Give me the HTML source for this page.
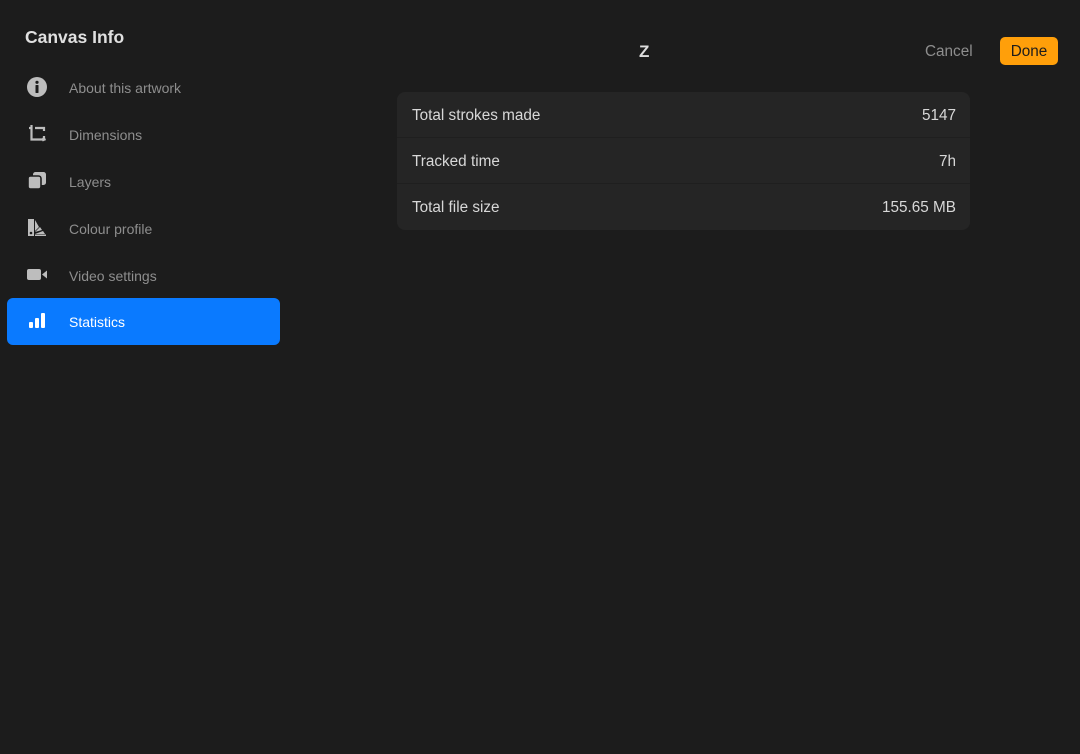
<!DOCTYPE html>
<html><head><meta charset="utf-8"><style>
*{margin:0;padding:0;box-sizing:border-box}
body{width:1080px;height:754px;background:#1c1c1c;font-family:"Liberation Sans",sans-serif;position:relative;overflow:hidden;color:#ddd}
.t{position:absolute;left:25px;top:27px;font-size:17.5px;font-weight:bold;color:#e0e0e0}
.item{position:absolute;left:7px;width:273px;height:47px;border-radius:6px;font-size:14px;color:#8e8e8e}
.item span{position:absolute;left:62px;top:16px}
.item svg{position:absolute;left:20px;top:13px;width:20px;height:20px}
.sel{background:#0a7aff;color:#fff}
.z{position:absolute;left:639px;top:42px;font-size:17px;font-weight:bold;color:#ddd}
.cancel{position:absolute;left:925px;top:43px;font-size:15.3px;color:#8e8e8e}
.done{position:absolute;left:1000px;top:37px;width:58px;height:28px;background:#ff9f0a;border-radius:5px;color:#1c1c1c;font-size:15.3px;text-align:center;line-height:29px}
.card{position:absolute;left:397px;top:92px;width:573px;height:138px;background:#252525;border-radius:8px}
.row{height:46px;border-bottom:1px solid #1f1f1f;position:relative;font-size:15.3px;color:#d8d8d8}
.row:last-child{border-bottom:none}
.row .l{position:absolute;left:15px;top:15px}
.row .r{position:absolute;right:14px;top:15px}
</style></head><body>
<div class="t">Canvas Info</div>
<div class="item" style="top:64px"><svg viewBox="0 0 20 20"><circle cx="10" cy="10" r="10" fill="#bdbdbd"/><circle cx="10" cy="5.3" r="1.6" fill="#1c1c1c"/><rect x="8.5" y="8" width="3" height="8" rx="0.5" fill="#1c1c1c"/></svg><span>About this artwork</span></div>
<div class="item" style="top:111px"><svg viewBox="0 0 20 20" fill="none" stroke="#bdbdbd" stroke-width="2.2"><path d="M4.5 1v14.5h14"/><path d="M2 4h2.5"/><path d="M8 4h9v3"/><path d="M17 12v3.5"/><path d="M15.5 14l2.5 1.5-2.5 1.5" stroke-width="1.2"/></svg><span>Dimensions</span></div>
<div class="item" style="top:158px"><svg viewBox="0 0 20 20" fill="#bdbdbd"><rect x="6" y="1" width="13" height="13" rx="2.5"/><rect x="1" y="5" width="13" height="13" rx="2.5" stroke="#1c1c1c" stroke-width="1.6"/></svg><span>Layers</span></div>
<div class="item" style="top:205px"><svg viewBox="0 0 20 20" fill="#bdbdbd"><path d="M1 1h6v17H1z"/><circle cx="4" cy="15" r="1.3" fill="#1c1c1c"/><path d="M8 2l4 7-4 4z"/><path d="M8 14l5-5 2 3z"/><path d="M8 16l8-3 2 3z"/><rect x="8" y="16.5" width="11" height="1.5"/></svg><span>Colour profile</span></div>
<div class="item" style="top:252px"><svg viewBox="0 0 20 20" fill="#bdbdbd"><rect x="0" y="4" width="14" height="11" rx="2"/><path d="M15 9.5l5-4v8z"/></svg><span>Video settings</span></div>
<div class="item sel" style="top:298px"><svg viewBox="0 0 20 20" fill="#fff"><rect x="2" y="11" width="4" height="6" rx="1"/><rect x="8" y="7" width="4" height="10" rx="1"/><rect x="14" y="2" width="4" height="15" rx="1"/></svg><span style="color:#fff">Statistics</span></div>
<div class="z">Z</div>
<div class="cancel">Cancel</div>
<div class="done">Done</div>
<div class="card">
<div class="row"><span class="l">Total strokes made</span><span class="r">5147</span></div>
<div class="row"><span class="l">Tracked time</span><span class="r">7h</span></div>
<div class="row"><span class="l">Total file size</span><span class="r">155.65 MB</span></div>
</div>
</body></html>
